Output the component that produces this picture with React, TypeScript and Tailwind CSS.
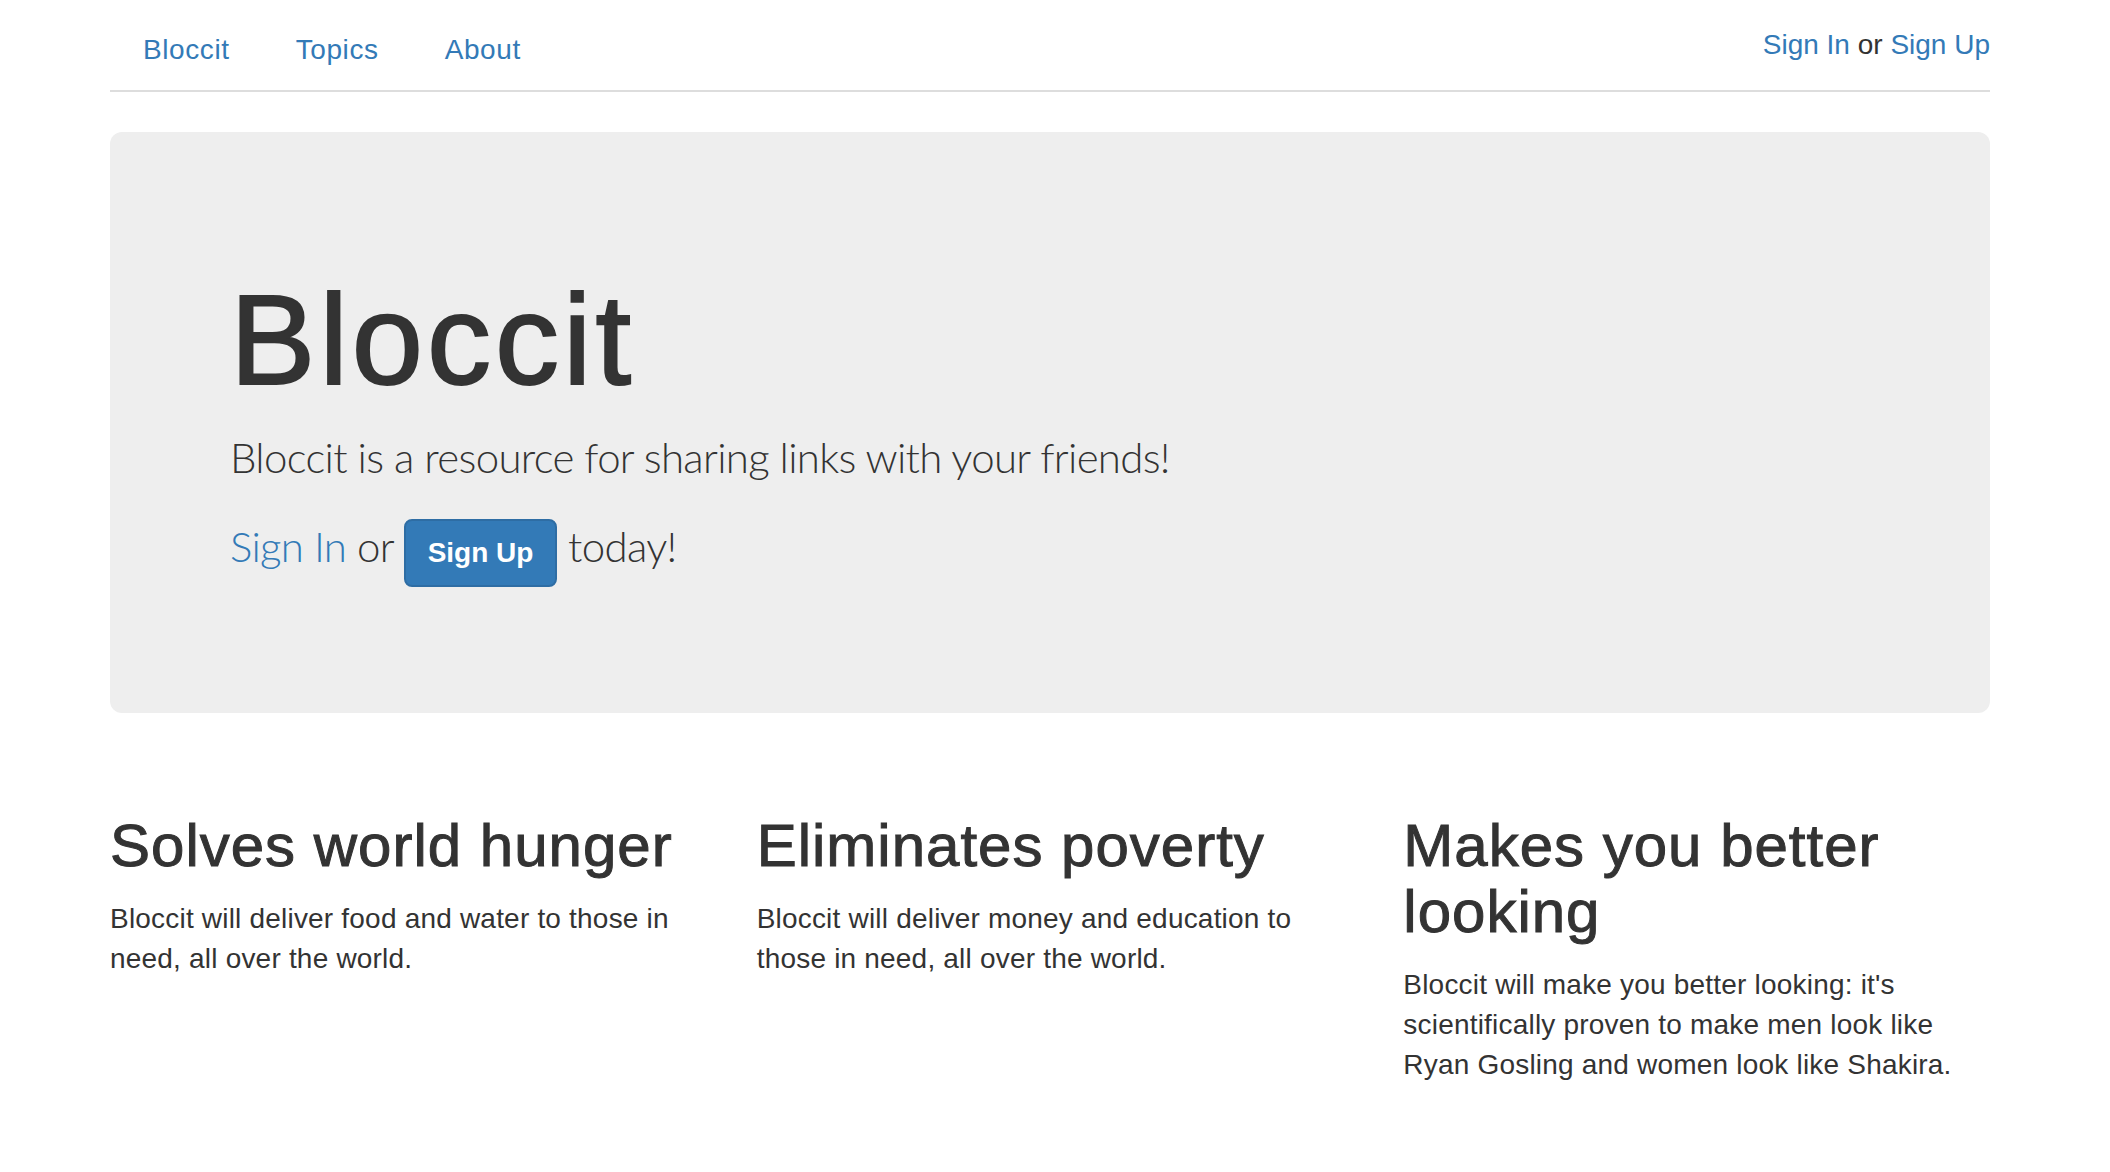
import React from 'react';

const features = [
  {
    title: 'Solves world hunger',
    body: 'Bloccit will deliver food and water to those in need, all over the world.',
  },
  {
    title: 'Eliminates poverty',
    body: 'Bloccit will deliver money and education to those in need, all over the world.',
  },
  {
    title: 'Makes you better looking',
    body: "Bloccit will make you better looking: it's scientifically proven to make men look like Ryan Gosling and women look like Shakira.",
  },
];

const App: React.FC = () => {
  return (
    <div className="min-h-screen bg-white text-[#333] font-['Liberation_Sans',Arial,sans-serif]">
      <div className="ml-[110px] w-[1880px]">
        {/* Top nav */}
        <header className="flex items-start justify-between border-b-2 border-[#ddd]">
          <ul className="flex gap-[6px] pt-[10px] pl-[3px]">
            {['Bloccit', 'Topics', 'About'].map((item) => (
              <li key={item}>
                <a href="#" className="block px-[30px] py-[20px] text-[28px] leading-[40px] tracking-[0.6px] text-[#337ab7]">
                  {item}
                </a>
              </li>
            ))}
          </ul>
          <div className="pt-[25px] text-[28px] leading-[40px]">
            <a href="#" className="text-[#337ab7]">Sign In</a> or{' '}
            <a href="#" className="text-[#337ab7]">Sign Up</a>
          </div>
        </header>

        {/* Jumbotron */}
        <section className="mt-[40px] rounded-[12px] bg-[#eee] px-[120px] pt-[96px] pb-[96px]">
          <h1 className="mt-[42px] mb-[16px] text-[128px] leading-[1.1] font-medium tracking-[4px] [-webkit-text-stroke:2px_#333]">
            Bloccit
          </h1>
          <p className="mb-[30px] text-[42px] leading-[60px] font-light tracking-[-0.7px] font-['Lato',Arial,sans-serif]">
            Bloccit is a resource for sharing links with your friends!
          </p>
          <p className="mb-[30px] -mt-[1px] text-[42px] leading-[60px] font-light tracking-[-0.7px] font-['Lato',Arial,sans-serif]">
            <a href="#" className="text-[#337ab7]">Sign In</a> or{' '}
            <a
              href="#"
              className="inline-block rounded-[8px] border-2 border-[#2e6da4] bg-[#337ab7] px-[22px] py-[12px] align-baseline text-[28px] leading-[40px] font-bold tracking-normal text-white font-['Liberation_Sans',Arial,sans-serif]"
            >
              Sign Up
            </a>{' '}
            today!
          </p>
        </section>

        {/* Features */}
        <div className="mt-[60px] grid grid-cols-3 gap-x-[60px]">
          {features.map((f) => (
            <div key={f.title}>
              <h2 className="mt-[40px] mb-[20px] text-[60px] leading-[1.1] font-medium tracking-[1px] [-webkit-text-stroke:1px_#333]">
                {f.title}
              </h2>
              <p className="mb-[20px] text-[28px] leading-[40px] tracking-[0.2px]">{f.body}</p>
            </div>
          ))}
        </div>
      </div>
    </div>
  );
};

export default App;
